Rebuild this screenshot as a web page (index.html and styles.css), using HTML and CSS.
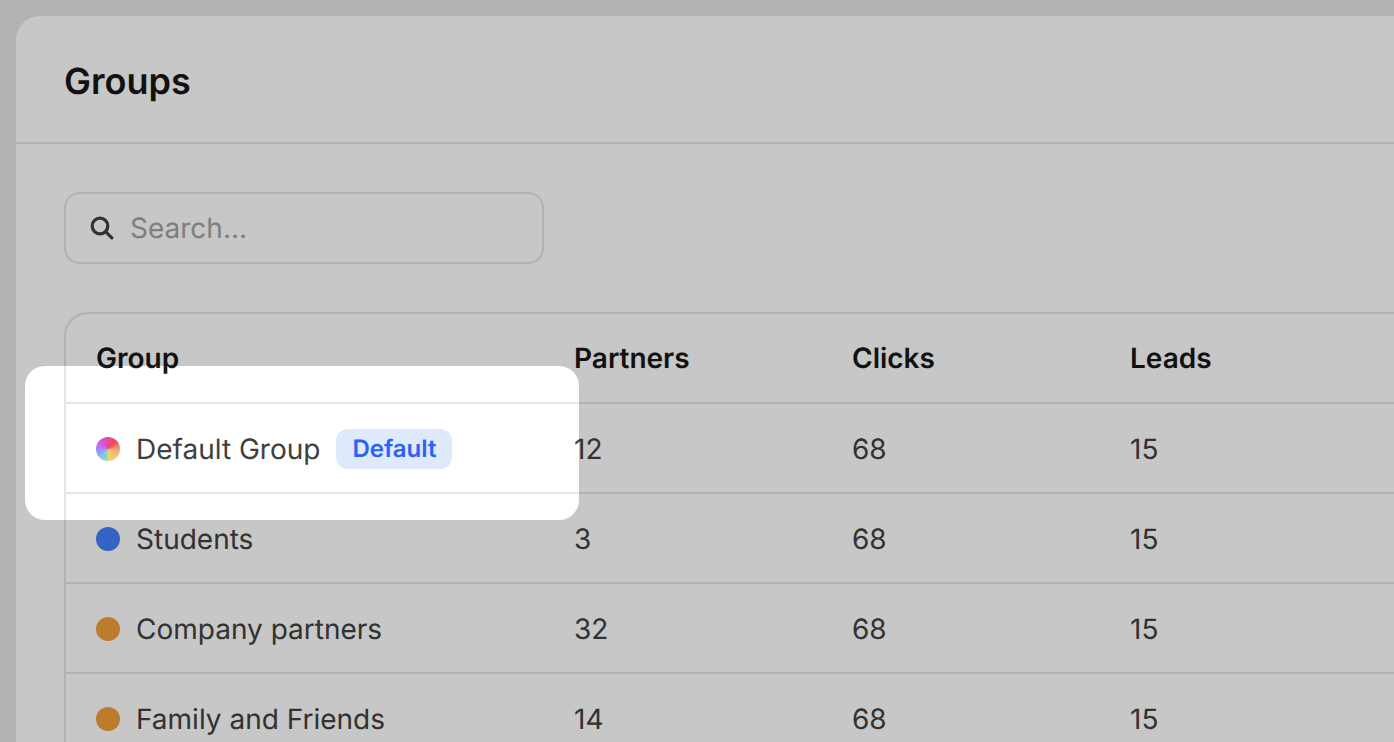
FILE: index.html
```html
<!DOCTYPE html>
<html lang="en">
<head>
<meta charset="utf-8">
<meta name="viewport" content="width=device-width, initial-scale=1">
<title>Groups</title>
<link rel="stylesheet" href="styles.css">
</head>
<body>
<div class="app">
  <main class="panel">
    <header class="panel-header">
      <h1 class="title">Groups</h1>
    </header>
    <div class="content">
      <label class="search">
        <svg class="search-icon" viewBox="0 0 24 24" fill="none" stroke="currentColor" stroke-width="3.2" stroke-linecap="round" aria-hidden="true">
          <circle cx="10" cy="10" r="7.8"/>
          <path d="M15.8 15.8 21.8 21.8"/>
        </svg>
        <input class="search-input" type="text" placeholder="Search..." aria-label="Search groups">
      </label>
      <div class="table-frame">
        <table class="groups">
          <thead>
            <tr><th class="col-group" scope="col">Group</th><th class="col-stat" scope="col">Partners</th><th class="col-stat" scope="col">Clicks</th><th scope="col">Leads</th></tr>
          </thead>
          <tbody>
            <tr>
              <td><div class="group-name"><span class="dot dot-rainbow"></span><span>Default Group</span><span class="badge">Default</span></div></td>
              <td>12</td><td>68</td><td>15</td>
            </tr>
            <tr>
              <td><div class="group-name"><span class="dot dot-blue"></span><span>Students</span></div></td>
              <td>3</td><td>68</td><td>15</td>
            </tr>
            <tr>
              <td><div class="group-name"><span class="dot dot-orange"></span><span>Company partners</span></div></td>
              <td>32</td><td>68</td><td>15</td>
            </tr>
            <tr>
              <td><div class="group-name"><span class="dot dot-orange"></span><span>Family and Friends</span></div></td>
              <td>14</td><td>68</td><td>15</td>
            </tr>
          </tbody>
        </table>
      </div>
    </div>
  </main>
  <div class="spotlight" aria-hidden="true"></div>
</div>
</body>
</html>
```
FILE: styles.css
```css
* { box-sizing: border-box; }

body {
  margin: 0;
  font-family: Inter, "Liberation Sans", sans-serif;
  font-size: 28px;
  line-height: 40px;
  text-rendering: geometricPrecision;
  color: #404040;
  background: #e5e5e5;
}

.app {
  position: relative;
  height: 100vh;
  overflow: hidden;
  padding: 16px 0 0 16px;
}

.panel {
  min-height: 100%;
  background: #fff;
  border-top-left-radius: 24px;
}

.panel-header {
  padding: 42px 48px 38px;
  border-bottom: 2px solid #e5e5e5;
}

.title {
  margin: 0;
  font-size: 36px;
  line-height: 46px;
  font-weight: 600;
  color: #171717;
}

.content { padding: 48px 0 0 48px; }

.search {
  display: flex;
  align-items: center;
  gap: 16px;
  width: 480px;
  max-width: 100%;
  padding: 14px 24px;
  border: 2px solid #e5e5e5;
  border-radius: 16px;
}

.search-icon {
  flex: none;
  width: 24px;
  height: 24px;
  color: #404040;
}

.search-input {
  flex: 1;
  min-width: 0;
  height: 40px;
  padding: 0;
  border: 0;
  outline: 0;
  background: transparent;
  font: inherit;
  text-rendering: inherit;
  color: #404040;
}

.search-input::placeholder { color: #a3a3a3; opacity: 1; }

.table-frame {
  margin-top: 48px;
  border: 2px solid #e5e5e5;
  border-right: 0;
  border-top-left-radius: 24px;
}

.groups {
  width: 100%;
  table-layout: fixed;
  border-spacing: 0;
}

.groups th,
.groups td {
  height: 90px;
  padding: 0;
  text-align: left;
  vertical-align: middle;
  border-bottom: 2px solid #e5e5e5;
}

.groups th { font-weight: 600; color: #171717; }
.groups td { padding-top: 2px; }

.groups th:first-child,
.groups td:first-child { padding-left: 30px; }

.col-group { width: 508px; }
.col-stat { width: 278px; }

.group-name {
  display: flex;
  align-items: center;
  gap: 16px;
}

.dot {
  flex: none;
  width: 24px;
  height: 24px;
  border-radius: 50%;
}

.dot-rainbow {
  background: conic-gradient(#e44a90, #ea4c5c 45deg, #f0a070 90deg, #f0bc70 120deg, #ecd86c 180deg, #84e8b0 181deg, #8cc8e4 215deg, #9a98f0 255deg, #b878e8 285deg, #dc50dc 320deg, #e44a90);
}

.dot-blue { background: #447ffb; }
.dot-orange { background: #f19f38; }

.badge {
  padding: 0 16px;
  border-radius: 12px;
  background: #dee9fc;
  color: #2b62f5;
  font-size: 24px;
  font-weight: 600;
}

.spotlight {
  position: absolute;
  top: 366px;
  left: 25px;
  width: 554px;
  height: 154px;
  border-radius: 20px;
  box-shadow: 0 0 0 3000px rgba(0, 0, 0, 0.22);
  pointer-events: none;
}
```
